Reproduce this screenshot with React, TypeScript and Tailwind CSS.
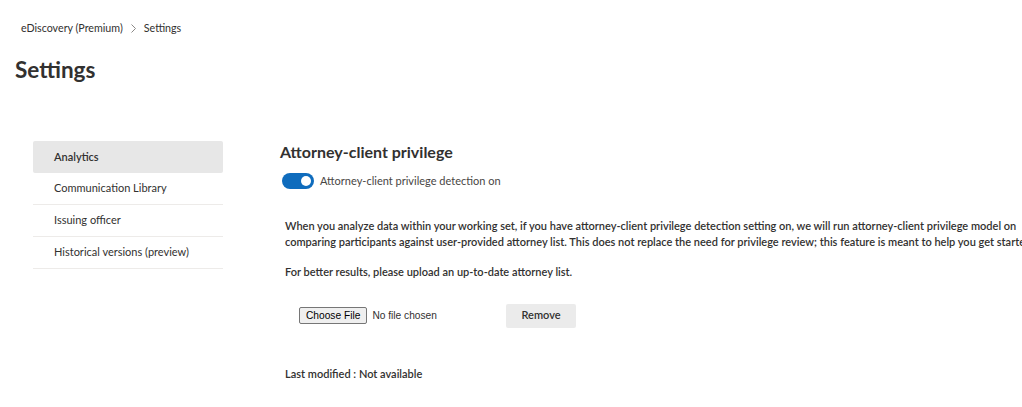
import { useState } from "react"

const navItems = ["Analytics", "Communication Library", "Issuing officer", "Historical versions (preview)"]

export default function App() {
  const [active, setActive] = useState("Analytics")
  const [on, setOn] = useState(true)

  return (
    <div className="h-[407px] w-[1022px] overflow-hidden bg-white text-[#323130] font-['Lato',sans-serif]">
      <div className="flex items-center pl-[21px] pt-[20px] text-[10.7px] text-[#323130]">
        <span>eDiscovery (Premium)</span>
        <svg width="5" height="9" viewBox="0 0 5 9" className="mx-[8px] text-[#8a8886]">
          <path d="M0.5 0.5l4 4-4 4" fill="none" stroke="currentColor" strokeWidth="1" />
        </svg>
        <span>Settings</span>
      </div>

      <h1 className="pl-[15px] pt-[20px] text-[22.5px] font-bold leading-[28px]">Settings</h1>

      <div className="mt-[37px] flex">
        <nav className="w-[242px] shrink-0 pl-[33px] pr-[19px] pt-[20px]">
          {navItems.map((item) => (
            <button
              key={item}
              onClick={() => setActive(item)}
              className={`flex h-[32px] w-full items-center pl-[21px] text-left text-[11px] ${
                active === item
                  ? "rounded-[2px] bg-[#e7e7e7] font-semibold"
                  : "border-b border-[#edebe9]"
              }`}
            >
              {item}
            </button>
          ))}
        </nav>

        <div className="h-[290px] w-[2px] bg-[#e8e8e8]" />

        <main className="flex-1 pl-[38px] pt-[20px] whitespace-nowrap">
          <h2 className="text-[16px] font-bold leading-[22px]">Attorney-client privilege</h2>

          <div className="mt-[10px] flex items-center gap-[6px] pl-[2px]">
            <button
              onClick={() => setOn(!on)}
              className={`flex h-[16px] w-[32px] items-center rounded-full px-[3px] ${
                on ? "justify-end bg-[#0f6cbd]" : "justify-start border border-[#605e5c] bg-white"
              }`}
            >
              <span className={`h-[10px] w-[10px] rounded-full ${on ? "bg-white" : "bg-[#605e5c]"}`} />
            </button>
            <span className="text-[11px] text-[#484644]">Attorney-client privilege detection on</span>
          </div>

          <div className="pl-[5px] pt-[28px] text-[11px] font-semibold leading-[16px]">
            <p>
              When you analyze data within your working set, if you have attorney-client privilege detection setting on,
              we will run attorney-client privilege model on
            </p>
            <p>
              comparing participants against user-provided attorney list. This does not replace the need for privilege
              review; this feature is meant to help you get started
            </p>
            <p className="mt-[14px]">For better results, please upload an up-to-date attorney list.</p>
          </div>

          <div className="mt-[24px] flex items-center pl-[19px]">
            <input
              type="file"
              className="w-[202px] text-[10.2px] text-[#323130] font-['Liberation_Sans',sans-serif] file:mr-[5px] file:rounded-[2px] file:border file:border-[#767676] file:bg-[#efefef] file:px-[6px] file:py-0 file:text-[10.2px] file:text-black"
            />
            <button className="ml-[5px] h-[24px] w-[70px] rounded-[2px] bg-[#ebebeb] text-[11px] font-semibold">
              Remove
            </button>
          </div>

          <p className="mt-[38px] pl-[5px] text-[11px] font-semibold">Last modified : Not available</p>
        </main>
      </div>
    </div>
  )
}
